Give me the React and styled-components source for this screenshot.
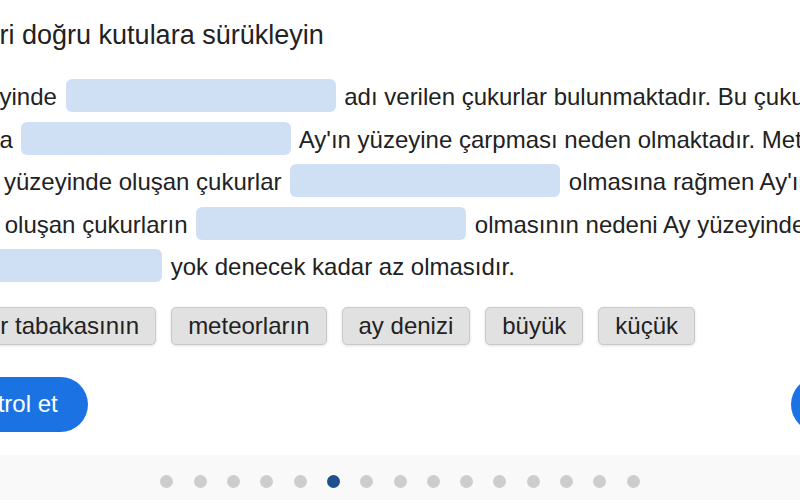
import React from 'react';
import styled, { createGlobalStyle } from 'styled-components';

const GlobalStyle = createGlobalStyle`
  html, body {
    margin: 0;
    padding: 0;
    background: #ffffff;
    overflow: hidden;
  }
  body {
    font-family: "Liberation Sans", Arial, sans-serif;
    color: #222222;
  }
`

const Page = styled.div`
  width: 800px;
  height: 500px;
  overflow: hidden;
`

// the slide is wider than the window and sits scrolled to the left
const Stage = styled.div`
  width: 956px;
  margin-left: -110px;
  padding-top: 20px;
`

const Title = styled.h2`
  margin: 0 0 25px 6px;
  font-size: 27px;
  font-weight: normal;
  line-height: normal;
  white-space: nowrap;
`

const Passage = styled.p`
  margin: 0;
  font-size: 24px;
  line-height: 42.5px;
  white-space: nowrap;
`

const Blank = styled.span`
  display: inline-block;
  width: 270px;
  height: 33px;
  margin: 0 2px;
  border-radius: 6px;
  background: #cfe0f5;
  vertical-align: -7px;
`

const WordBank = styled.div`
  display: flex;
  gap: 15px;
  margin: 18px 0 0 8px;
`

const Chip = styled.div`
  padding: 4px 16px;
  font-size: 24px;
  line-height: 28px;
  white-space: nowrap;
  background: #e1e1e1;
  border: 1px solid #c9c9c9;
  border-radius: 5px;
  box-shadow: 0 1px 3px rgba(0, 0, 0, 0.12);
`

const Controls = styled.div`
  display: flex;
  justify-content: space-between;
  align-items: center;
  margin-top: 32px;
  padding-left: 35px;
`

const CheckButton = styled.button`
  height: 55px;
  padding: 0 30px;
  border: none;
  border-radius: 28px;
  background: #1b73e3;
  color: #ffffff;
  font-family: "Liberation Sans", Arial, sans-serif;
  font-size: 24px;
`

const NextButton = styled.button`
  width: 55px;
  height: 55px;
  border: none;
  border-radius: 50%;
  background: #1b73e3;
`

const Footer = styled.div`
  display: flex;
  justify-content: center;
  gap: 20.3px;
  margin-top: 23px;
  padding: 20px 0 30px;
  background: #f9f9f9;
`

const Dot = styled.span`
  width: 13px;
  height: 13px;
  border-radius: 50%;
  background: ${p => (p.$active ? '#214f8e' : '#cdcdcd')};
`

const words = ['atmosfer tabakasının', 'meteorların', 'ay denizi', 'büyük', 'küçük'];

const App = () => {
    return (
        <>
            <GlobalStyle />
            <Page>
                <Stage>
                    <Title>Kelimeleri doğru kutulara sürükleyin</Title>
                    <Passage>
                        Ay'ın yüzeyinde <Blank /> adı verilen çukurlar bulunmaktadır. Bu çukurların<br />
                        oluşmasına <Blank /> Ay'ın yüzeyine çarpması neden olmaktadır. Meteorların<br />
                        Dünya'nın yüzeyinde oluşan çukurlar <Blank /> olmasına rağmen Ay'ın<br />
                        yüzeyinde oluşan çukurların <Blank /> olmasının nedeni Ay yüzeyinde<br />
                        <Blank /> yok denecek kadar az olmasıdır.
                    </Passage>
                    <WordBank>
                        {words.map(w => (
                            <Chip key={w}>{w}</Chip>
                        ))}
                    </WordBank>
                    <Controls>
                        <CheckButton>Kontrol et</CheckButton>
                        <NextButton aria-label="ileri" />
                    </Controls>
                </Stage>
                <Footer>
                    {Array.from({ length: 15 }).map((_, i) => (
                        <Dot key={i} $active={i === 5} />
                    ))}
                </Footer>
            </Page>
        </>
    );
};

export default App;
